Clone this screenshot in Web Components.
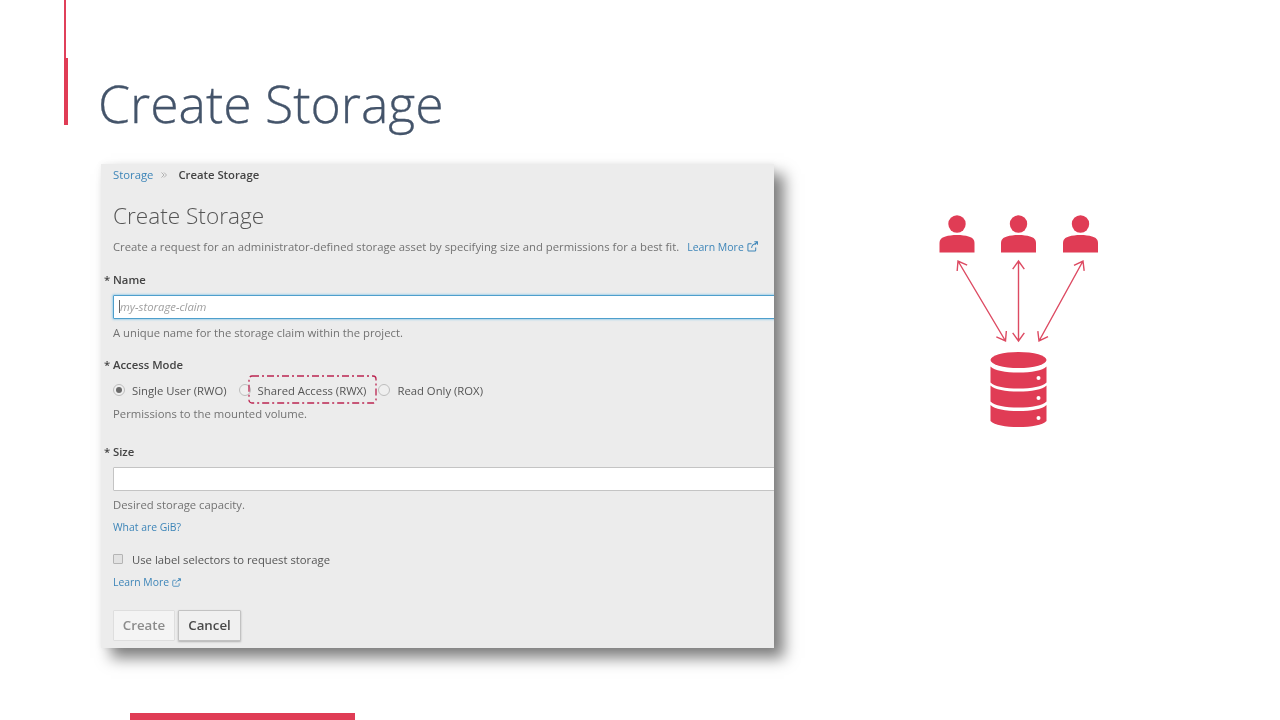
<!DOCTYPE html>
<html>
<head>
<meta charset="utf-8">
<title>Create Storage</title>
<style>
  html, body { margin: 0; padding: 0; background: #fff; }
  body { width: 1280px; height: 720px; overflow: hidden; font-family: "Open Sans", "Liberation Sans", sans-serif; }
</style>
</head>
<body>
<slide-page heading="Create Storage">
  <storage-form slot="left"></storage-form>
  <access-diagram slot="right"></access-diagram>
</slide-page>

<script>
// external link glyph, used beside both Learn More links
const extIcon = (size) => `<svg width="${size}" height="${size}" viewBox="0 0 12 12" fill="none" stroke="currentColor" stroke-width="1.1" style="vertical-align:-1px"><path d="M9.500 7v3a1 1 0 0 1-1 1H2a1 1 0 0 1-1-1V4a1 1 0 0 1 1-1h3"/><path d="M5 7.500c.4-2.600 2-4.200 4.600-4.400M8 .9h3.400v3.300"/><path d="M11.200 1.100 8.400 3.900" stroke-width="1.400"/></svg>`;

class SlidePage extends HTMLElement {
  constructor() {
    super();
    this.attachShadow({ mode: "open" });
  }
  connectedCallback() {
    this.shadowRoot.innerHTML = `
    <style>
      :host { display: block; position: relative; width: 1280px; height: 720px; overflow: hidden; background: #fff; }
      .thin { position: absolute; left: 64px; top: 0; width: 1.5px; height: 58px; background: #e0405a; }
      .thick { position: absolute; left: 64px; top: 58px; width: 4px; height: 67px; background: #e03c55; }
      h1 {
        margin: 0; padding: 69px 0 0 98px;
        font: 300 51.700px/68px "Open Sans", "Liberation Sans", sans-serif;
        color: #44546a;
        -webkit-text-stroke: 0.3px #44546a;
        filter: blur(0.3px);
      }
      .body { display: flex; padding: 27px 0 0 101px; }
      .right { margin-left: 146px; padding-top: 36px; filter: blur(0.3px); }
      .tab { position: absolute; left: 130px; top: 713px; width: 225px; height: 7px; background: #e03c55; }
    </style>
    <div class="thin"></div><div class="thick"></div>
    <h1>${this.getAttribute("heading")}</h1>
    <div class="body">
      <slot name="left"></slot>
      <div class="right"><slot name="right"></slot></div>
    </div>
    <div class="tab"></div>`;
  }
}

class FormField extends HTMLElement {
  constructor() {
    super();
    this.attachShadow({ mode: "open" });
  }
  connectedCallback() {
    const label = this.getAttribute("label");
    this.shadowRoot.innerHTML = `
    <style>
      :host { display: block; }
      .lab { position: relative; font-weight: 600; font-size: 11.300px; line-height: 16px; color: #444; }
      .lab span { position: absolute; left: -9px; top: 0; }
    </style>
    <div class="lab"><span>*</span>${label}</div>
    <slot></slot>`;
  }
}

class TextBox extends HTMLElement {
  constructor() {
    super();
    this.attachShadow({ mode: "open" });
  }
  connectedCallback() {
    const focus = this.hasAttribute("focused");
    const ph = this.getAttribute("placeholder") || "";
    this.shadowRoot.innerHTML = `
    <style>
      :host { display: block; margin-right: -4px; }
      .box {
        box-sizing: border-box; height: 24px; background: #fff;
        border: 1px solid ${focus ? "#4f9fcc" : "#c4c4c4"};
        border-radius: 1px;
        padding-left: 5px;
        font-style: italic; font-size: 11.300px; line-height: 22px; color: #a0a0a0;
        ${focus ? "box-shadow: 0 0 2px 1px #a9d3ea;" : ""}
      }
      i { display: inline-block; width: 1px; height: 13px; background: #666; vertical-align: -2px; }
    </style>
    <div class="box">${focus ? "<i></i>" : ""}${ph}</div>`;
  }
}

class RadioOption extends HTMLElement {
  constructor() {
    super();
    this.attachShadow({ mode: "open" });
  }
  connectedCallback() {
    const on = this.hasAttribute("checked");
    this.shadowRoot.innerHTML = `
    <style>
      :host { display: inline-flex; align-items: center; font-size: 11.300px; color: #555; }
      .dot {
        box-sizing: border-box; width: 12px; height: 12px; border-radius: 50%;
        border: 1px solid #bcbcbc; background: #efefef; margin-right: 7px;
        display: flex; align-items: center; justify-content: center; flex: none;
      }
      .dot b { width: 6px; height: 6px; border-radius: 50%; background: #6a6a6a; display: ${on ? "block" : "none"}; }
    </style>
    <span class="dot"><b></b></span><slot></slot>`;
  }
}

class StorageForm extends HTMLElement {
  constructor() {
    super();
    this.attachShadow({ mode: "open" });
  }
  connectedCallback() {
    this.shadowRoot.innerHTML = `
    <style>
      :host {
        display: block; box-sizing: border-box; width: 673px; height: 484px;
        background: #ececec; font-size: 11.300px; color: #727272;
        box-shadow: 10px 10px 14px rgba(0,0,0,.5), 0 0 6px rgba(0,0,0,.06);
        position: relative;
      }
      .inner { height: 100%; padding: 3px 0 0 12px; box-sizing: border-box; overflow: hidden; font-family: "Open Sans", "Liberation Sans", sans-serif; filter: blur(0.3px); }
      a { color: #3d85b8; text-decoration: none; }
      .crumb { line-height: 16px; color: #444; font-weight: 600; display: flex; align-items: center; }
      .crumb a { font-weight: 400; }
      .crumb svg { margin: 0 11px 0 8px; }
      h2 { margin: 18px 0 0; font: 300 22.600px/30px "Open Sans", "Liberation Sans", sans-serif; color: #555; }
      .lead { margin: 8px 0 0; line-height: 16px; white-space: nowrap; }
      .lead a { margin-left: 5px; font-size: 10.500px; }
      .help { line-height: 16px; }
      .name { margin-top: 17px; }
      .name text-box { margin-top: 7px; }
      .name .help { margin-top: 6px; }
      .access { margin-top: 16px; }
      .radios { display: flex; align-items: center; height: 18px; margin-top: 8px; }
      .radios radio-option + radio-option { margin-left: 12px; }
      .access .help { margin-top: 7px; }
      .size { margin-top: 22px; }
      .size text-box { margin-top: 7px; }
      .size .help { margin-top: 6px; }
      .gib { margin-top: 6px; line-height: 16px; font-size: 10.400px; }
      .check { display: flex; align-items: center; height: 18px; margin-top: 15px; color: #555; }
      .check span { box-sizing: border-box; width: 10px; height: 10px; border: 1px solid #b4b4b4; background: #e2e2e2; border-radius: 1px; margin: 0 9px 0 0; }
      .more { margin-top: 6px; line-height: 16px; font-size: 10.400px; }
      .btns { display: flex; gap: 3px; margin-top: 20px; }
      .btns button {
        font: 600 13.300px/1 "Open Sans", "Liberation Sans", sans-serif;
        height: 31px; padding: 0; border-radius: 1px; background: #f0f0f0;
      }
      .btns .create { width: 62px; color: #8c8c8c; border: 1px solid #dedede; background: #f4f4f4; }
      .btns .cancel { width: 63px; color: #4a4a4a; border: 1px solid #c2c2c2; box-shadow: 0 1px 2px rgba(0,0,0,.25); }
      .mark { position: absolute; left: 147px; top: 211px; width: 129px; height: 29px; pointer-events: none; }
      .mark svg { display: block; }
    </style>
    <div class="inner">
      <div class="crumb"><a>Storage</a><svg width="6" height="6" viewBox="0 0 6 6" fill="none" stroke="#b2b2b2" stroke-width="1"><path d="M.5.500 3 3 .5 5.500M3 .5 5.500 3 3 5.500"/></svg>Create Storage</div>
      <h2>Create Storage</h2>
      <p class="lead">Create a request for an administrator-defined storage asset by specifying size and permissions for a best fit. <a>Learn More ${extIcon(11)}</a></p>
      <form-field class="name" label="Name">
        <text-box focused placeholder="my-storage-claim"></text-box>
        <div class="help">A unique name for the storage claim within the project.</div>
      </form-field>
      <form-field class="access" label="Access Mode">
        <div class="radios">
          <radio-option checked>Single User (RWO)</radio-option>
          <radio-option>Shared Access (RWX)</radio-option>
          <radio-option>Read Only (ROX)</radio-option>
        </div>
        <div class="help">Permissions to the mounted volume.</div>
      </form-field>
      <form-field class="size" label="Size">
        <text-box></text-box>
        <div class="help">Desired storage capacity.</div>
      </form-field>
      <div class="gib"><a>What are GiB?</a></div>
      <div class="check"><span></span>Use label selectors to request storage</div>
      <div class="more"><a>Learn More ${extIcon(9)}</a></div>
      <div class="btns"><button class="create">Create</button><button class="cancel">Cancel</button></div>
    </div>
    <div class="mark"><svg width="129" height="29" viewBox="0 0 129 29" fill="none"><rect x="1" y="1" width="127" height="27" rx="3" stroke="#bb2450" stroke-width="1.300" stroke-dasharray="7 3 2 3"/></svg></div>`;
  }
}

class AccessDiagram extends HTMLElement {
  constructor() {
    super();
    this.attachShadow({ mode: "open" });
  }
  connectedCallback() {
    const user = (cx) => `<circle cx="${cx}" cy="224" r="8.700"/><path d="M${cx - 17.500} 252.500v-9c0-4 2-6 6-7 3-1 7-1.500 11.500-1.500s8.500.5 11.500 1.500c4 1 6 3 6 7v9z"/>`;
    const arrow = (x1, y1, x2, y2) => {
      // double headed line, head barbs worked out from the line angle
      const a = Math.atan2(y2 - y1, x2 - x1), l = 10, s = 0.62;
      const head = (x, y, t) => `M${x + l * Math.cos(t - s)} ${y + l * Math.sin(t - s)}L${x} ${y}L${x + l * Math.cos(t + s)} ${y + l * Math.sin(t + s)}`;
      return `<path d="M${x1} ${y1}L${x2} ${y2}${head(x1, y1, a)}${head(x2, y2, a + Math.PI)}"/>`;
    };
    const band = (y, h) => `<path d="M990.500 ${y}c4 4 15 6 28 6s24-2 28-6v${h}c-4 4-15 6-28 6s-24-2-28-6z"/>`;
    this.shadowRoot.innerHTML = `
    <style>
      :host { display: block; }
      svg { display: block; }
    </style>
    <svg width="200" height="240" viewBox="920 200 200 240">
      <g fill="#e03c55">${user(957)}${user(1018.500)}${user(1080.500)}</g>
      <g fill="none" stroke="#dd4a62" stroke-width="1.400">
        ${arrow(958, 261, 1005.500, 341)}
        ${arrow(1018.500, 261, 1018.500, 341)}
        ${arrow(1083, 261, 1039, 341)}
      </g>
      <g fill="#e03c55">
        <ellipse cx="1018.500" cy="360" rx="28" ry="8"/>
        ${band(366.500, 16)}${band(385.500, 16)}${band(405, 16)}
      </g>
      <g fill="#fff"><circle cx="1038.500" cy="378" r="2"/><circle cx="1038.500" cy="398" r="2"/><circle cx="1038.500" cy="418" r="2"/></g>
    </svg>`;
  }
}

customElements.define("slide-page", SlidePage);
customElements.define("form-field", FormField);
customElements.define("text-box", TextBox);
customElements.define("radio-option", RadioOption);
customElements.define("storage-form", StorageForm);
customElements.define("access-diagram", AccessDiagram);
</script>
</body>
</html>
